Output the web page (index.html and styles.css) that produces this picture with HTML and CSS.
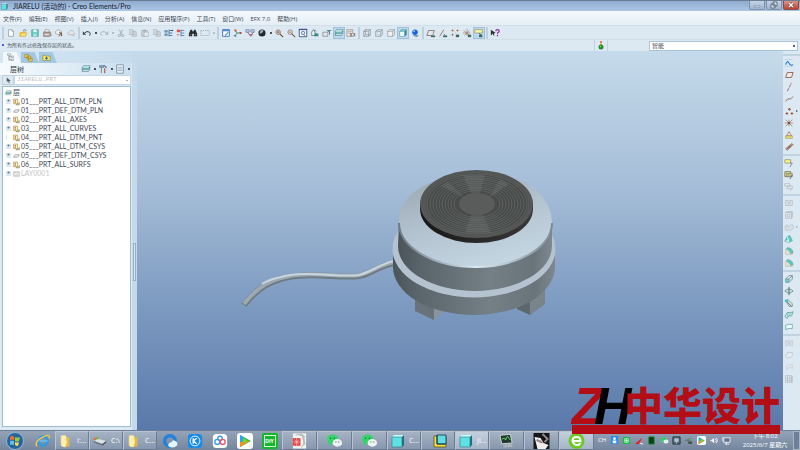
FILE: index.html
```html
<!DOCTYPE html>
<html lang="zh-CN">
<head>
    <meta charset="UTF-8">
    <meta name="viewport" content="width=device-width, initial-scale=1.0">
    <title>JIARELU (活动的) - Creo Elements/Pro</title>
    <link rel="stylesheet" href="styles.css">
</head>
<body>
    <svg class="sprite" aria-hidden="true">
        <symbol id="new" viewBox="0 0 12 12"><path d="M3 2h4l2 2v6H3z" fill="#fff" stroke="#8a8f96" stroke-width=".8"/><path d="M7 2v2h2" fill="none" stroke="#8a8f96" stroke-width=".7"/></symbol>
        <symbol id="open" viewBox="0 0 12 12"><path d="M2 5h3l1-1h3v6H2z" fill="#e8b93a"/><path d="M2 10l2-4h7l-2 4z" fill="#ffe070" stroke="#b98d25" stroke-width=".5"/><path d="M6 3q2-2 4 0" fill="none" stroke="#4c6d9a"/></symbol>
        <symbol id="save" viewBox="0 0 12 12"><path d="M2 2h8v8H2z" fill="#63c9bd" stroke="#3e8f8a" stroke-width=".6"/><path d="M4 2h4v3H4z" fill="#effbfa"/><path d="M4 7h4v3H4z" fill="#b9e4df"/></symbol>
        <symbol id="print" viewBox="0 0 12 12"><path d="M4 2h4l1 3H3z" fill="#fff" stroke="#776a62" stroke-width=".6"/><path d="M2 5h8l1 4-2 1H2z" fill="#b7aaa0" stroke="#665a52" stroke-width=".7"/><path d="M3 8h5" stroke="#f7efe5"/></symbol>
        <symbol id="mail" viewBox="0 0 12 12"><path d="M2 7V4l3-2 4 2v4z" fill="#f6f6f4" stroke="#777" stroke-width=".6"/><path d="M6 5l3 1v3M6 10l2-4" fill="none" stroke="#614c43"/><circle cx="9" cy="9" r="1" fill="#a65a3c"/></symbol>
        <symbol id="cloud" viewBox="0 0 12 12"><path d="M2 7q0-2 2-2 1-3 4-2 1 1 1 2 2 1 1 3H3z" fill="#e4e8eb" stroke="#a1a9b0" stroke-width=".7"/><path d="M6 8l4 2" stroke="#b2b8be"/></symbol>
        <symbol id="undo" viewBox="0 0 12 12"><path d="M3 6q3-3 6-1 2 2 0 4" fill="none" stroke="#384048" stroke-width="1.2"/><path d="M1 4v4h4z" fill="#384048"/></symbol>
        <symbol id="redo" viewBox="0 0 12 12"><path d="M9 6Q6 3 3 5q-2 2 0 4" fill="none" stroke="#a9b2ba" stroke-width="1.1"/><path d="M11 4v4H7z" fill="#a9b2ba"/></symbol>
        <symbol id="cut" viewBox="0 0 12 12"><path d="M4 2l3 6M8 2L5 8" stroke="#9da6ae" fill="none"/><circle cx="4" cy="9" r="1.3" fill="none" stroke="#9da6ae"/><circle cx="8" cy="9" r="1.3" fill="none" stroke="#9da6ae"/></symbol>
        <symbol id="copy" viewBox="0 0 12 12"><path d="M2 2h4l1 1v5H2zM5 4h4l1 1v5H5z" fill="#d6dde2" stroke="#a3acb4" stroke-width=".7"/><path d="M6 6h3M6 8h3" stroke="#adb4bb" stroke-width=".6"/></symbol>
        <symbol id="paste" viewBox="0 0 12 12"><path d="M2 3h7v7H2z" fill="#c7ced4" stroke="#a0a8b0" stroke-width=".7"/><path d="M4 2h3v2H4z" fill="#a0a8b0"/><path d="M5 5h5v5H5z" fill="#e7ebee" stroke="#a0a8b0" stroke-width=".6"/></symbol>
        <symbol id="regen" viewBox="0 0 12 12"><path d="M1 3h3v2H1zM1 7h3v2H1z" fill="#65c5c3" stroke="#447" stroke-width=".5"/><path d="M6 2v8M6 3h4M6 6h4M6 9h4" stroke="#3f6ba0" fill="none"/><circle cx="10" cy="3" r="1" fill="#347"/></symbol>
        <symbol id="regenr" viewBox="0 0 12 12"><path d="M1 2h4v3H1z" fill="#e55243"/><path d="M1 7h3v2H1z" fill="#e89187"/><path d="M6 2v8M6 3h4M6 6h4M6 9h4" stroke="#557cad" fill="none"/></symbol>
        <symbol id="find" viewBox="0 0 12 12"><path d="M3 2h2v2h2V2h2l2 5v3H7V7H5v3H1V7z" fill="#2b2b2d"/><path d="M2 8h2M8 8h2" stroke="#aaa" stroke-width=".7"/></symbol>
        <symbol id="select" viewBox="0 0 12 12"><path d="M1 3h10v6H1z" fill="none" stroke="#8e99a5" stroke-width=".8" stroke-dasharray="1.5 1"/></symbol>
        <symbol id="sketchwin" viewBox="0 0 12 12"><path d="M2 2h8v8H2z" fill="#fff" stroke="#2e64a8"/><path d="M2 2h8v2H2z" fill="#4f8ed1"/><path d="M5 9l4-4" stroke="#4a9ad8" stroke-width="1.4"/></symbol>
        <symbol id="csys" viewBox="0 0 12 12"><path d="M2 2l3 4h5M5 6l-3 4" stroke="#2a7f58" fill="none"/><circle cx="3" cy="3" r="1.2" fill="#d8322d"/><circle cx="9" cy="6" r="1.3" fill="#bd392f"/><path d="M1 9l3 1" stroke="#267"/></symbol>
        <symbol id="views" viewBox="0 0 12 12"><path d="M1 2h4v3H1zM7 2h4v3H7z" fill="#c6d4ec" stroke="#53658d" stroke-width=".7"/><path d="M3 5l4 5 3-5M5 8h4" fill="none" stroke="#8f506b"/></symbol>
        <symbol id="sphere" viewBox="0 0 12 12"><circle cx="6" cy="6" r="4.3" fill="#25292e"/><path d="M4 3q2-1 4 0l-2 3-3 1z" fill="#a2aab3"/></symbol>
        <symbol id="zoomin" viewBox="0 0 12 12"><circle cx="5" cy="5" r="2.7" fill="#e9dbd3" stroke="#8b6b5f"/><path d="M7 7l4 4" stroke="#704437" stroke-width="1.3"/><path d="M3.5 5h3M5 3.5v3" stroke="#543" stroke-width=".7"/></symbol>
        <symbol id="zoomout" viewBox="0 0 12 12"><circle cx="5" cy="5" r="2.7" fill="#ecdfd9" stroke="#92776d"/><path d="M7 7l4 4" stroke="#80584c" stroke-width="1.3"/><path d="M3.5 5h3" stroke="#654" stroke-width=".7"/></symbol>
        <symbol id="refit" viewBox="0 0 12 12"><path d="M1.500 1.500h9v9h-9z" fill="#fff" stroke="#29468b"/><circle cx="6" cy="6" r="2.200" fill="#d6e6f3" stroke="#5a7298"/><path d="M1 2h10" stroke="#29468b"/><path d="M7 8l2 2" stroke="#853"/></symbol>
        <symbol id="orient" viewBox="0 0 12 12"><path d="M2 9V5l2-3 2 3v4z" fill="#e7f3f1" stroke="#455" stroke-width=".7"/><path d="M6 6l4 1v3H5z" fill="#328a7e"/><path d="M5 2l2 2" stroke="#243"/></symbol>
        <symbol id="namedview" viewBox="0 0 12 12"><path d="M1 5h6v5H1z" fill="#dde3e6" stroke="#667078" stroke-width=".7"/><path d="M6 3h5M9 3v5" stroke="#4a6065" stroke-width=".9"/><circle cx="8" cy="4" r="1" fill="#42a0a0"/></symbol>
        <symbol id="layers" viewBox="0 0 12 12"><path d="M1 9l2-3h8L9 9z" fill="#dff4f4" stroke="#3e6f7c" stroke-width=".6"/><path d="M1 7l2-3h8L9 7z" fill="#7fd1cf" stroke="#3e6f7c" stroke-width=".6"/><path d="M1 5l2-3h8L9 5z" fill="#c6efec" stroke="#3e6f7c" stroke-width=".6"/></symbol>
        <symbol id="viewmgr" viewBox="0 0 12 12"><path d="M1 2h7v8H1z" fill="#ebe8e2" stroke="#857c74" stroke-width=".7"/><path d="M2 4h5M2 6h4" stroke="#857c74" stroke-width=".6"/><path d="M5 6h6v4H5z" fill="#8d8075"/><circle cx="8" cy="8" r="1.300" fill="#f1ede5"/></symbol>
        <symbol id="wire" viewBox="0 0 12 12"><path d="M2 4h6v6H2zM4 2h6v6H4zM2 4l2-2M8 4l2-2M2 10l2-2M8 10l2-2" fill="none" stroke="#7b8288" stroke-width=".7"/></symbol>
        <symbol id="hidden" viewBox="0 0 12 12"><path d="M2 4h6v6H2zM2 4l2-2h6v6l-2 2M8 4l2-2" fill="none" stroke="#7b8288" stroke-width=".7"/><path d="M4 4v4h4" fill="none" stroke="#b6bcc0" stroke-width=".6"/></symbol>
        <symbol id="nohidden" viewBox="0 0 12 12"><path d="M2 4h6v6H2zM2 4l2-2h6v6l-2 2M8 4l2-2" fill="#edf2f5" stroke="#81888e" stroke-width=".7"/></symbol>
        <symbol id="shaded" viewBox="0 0 12 12"><path d="M2 4h6v6H2z" fill="#eefcfb"/><path d="M2 4l2-2h6L8 4z" fill="#79d8d5"/><path d="M8 4l2-2v6l-2 2z" fill="#2d8e91"/><path d="M2 4h6v6H2zM2 4l2-2h6v6l-2 2" fill="none" stroke="#4b8186" stroke-width=".6"/></symbol>
        <symbol id="blueball" viewBox="0 0 12 12"><path d="M3 9l3-1 5 1-3 2z" fill="#8497a9"/><circle cx="6" cy="5" r="3.300" fill="#1264dc"/><circle cx="5" cy="4" r="1.200" fill="#83c2ff"/></symbol>
        <symbol id="planeeye" viewBox="0 0 12 12"><path d="M1 9l2-6h7L8 9z" fill="none" stroke="#88614e" stroke-width=".9"/><path d="M6 9h5v2H6z" fill="#3c695f"/></symbol>
        <symbol id="axiseye" viewBox="0 0 12 12"><path d="M2 10l5-8" stroke="#936a52"/><path d="M6 9h5v2H6z" fill="#3c695f"/><path d="M7 7l2 2" stroke="#567"/></symbol>
        <symbol id="pointeye" viewBox="0 0 12 12"><path d="M2 3h2M3 2v2M8 3h2M9 2v2M2 8h2M3 7v2" stroke="#a0582d" stroke-width="1.200"/><path d="M4 3l4 5" stroke="#ccb19b" stroke-width=".6"/><path d="M7 8h4v3H7z" fill="#3c695f"/></symbol>
        <symbol id="csyseye" viewBox="0 0 12 12"><path d="M2 3l7 6M3 9l6-6M6 1v8M1 6h9" stroke="#9b755d" stroke-width=".8"/><path d="M7 8h4v3H7z" fill="#3c695f"/></symbol>
        <symbol id="noteeye" viewBox="0 0 12 12"><path d="M1 2h9v4H1z" fill="#f8f4a4" stroke="#8c8958" stroke-width=".7"/><path d="M6 6l3 3" stroke="#555"/><path d="M6 8h4v3H6z" fill="#3c695f"/></symbol>
        <symbol id="help" viewBox="0 0 12 12"><path d="M1 2v7l2-2 2 3V6h2z" fill="#333"/><path d="M7 4q0-2 2-2t2 2q0 1-2 2v1M9 8v2" fill="none" stroke="#8b2a9b" stroke-width="1.400"/></symbol>
        <symbol id="sketch" viewBox="0 0 12 12"><path d="M1 2h10M1 10h10" stroke="#8fb4df" stroke-width=".8" stroke-dasharray="1.500 1"/><path d="M2 8q2-6 4-2t5 2" fill="none" stroke="#2277d8" stroke-width="1.300"/></symbol>
        <symbol id="plane" viewBox="0 0 12 12"><path d="M2 9l2-6h7L9 9z" fill="#f3e8e2" stroke="#885a48" stroke-width="1"/></symbol>
        <symbol id="axis" viewBox="0 0 12 12"><path d="M4 11l5-10" stroke="#885a48" stroke-dasharray="4 1"/></symbol>
        <symbol id="curve" viewBox="0 0 12 12"><path d="M2 9q2-4 4-3t5-3" fill="none" stroke="#885a48"/></symbol>
        <symbol id="point" viewBox="0 0 12 12"><path d="M2 9h3M3.500 7.500v3M8 9h3M9.500 7.500v3M5 4h3M6.500 2.500v3" stroke="#9a5133" stroke-width="1.300"/></symbol>
        <symbol id="star" viewBox="0 0 12 12"><path d="M2 2l8 8M2 10l8-8M1 6h10M6 2v8" stroke="#96765f" stroke-width=".8"/><circle cx="6" cy="6" r="1.600" fill="#934930"/></symbol>
        <symbol id="field" viewBox="0 0 12 12"><path d="M3 7l3-5 3 5z" fill="#eee" stroke="#945b43" stroke-width=".8"/><path d="M2 7h8v3H2z" fill="#e8dc73" stroke="#96894d" stroke-width=".6"/></symbol>
        <symbol id="chain" viewBox="0 0 12 12"><path d="M2 8l7-6 2 1-7 7z" fill="#cfae98" stroke="#885a48" stroke-width=".8"/><path d="M4 8l5-4" stroke="#603c2d"/></symbol>
        <symbol id="note" viewBox="0 0 12 12"><path d="M1 2h7v4H1z" fill="#f7f28b" stroke="#8e8a55" stroke-width=".8"/><path d="M7 6h3L7 11" fill="none" stroke="#77808a"/></symbol>
        <symbol id="notes" viewBox="0 0 12 12"><path d="M1 2h7v6H1z" fill="#e5df8d" stroke="#77744f"/><path d="M3 4h7v4H3z" fill="#bdb985" stroke="#6e6d5d" stroke-width=".6"/><path d="M10 6L7 11" stroke="#667"/></symbol>
        <symbol id="tags" viewBox="0 0 12 12"><path d="M1 2h6v3H1zM4 5h6v3H4zM8 8v3" fill="#e6e9eb" stroke="#a9b3bb" stroke-width=".8"/></symbol>
        <symbol id="hole" viewBox="0 0 12 12"><path d="M2 3h3v4h2V3h3v6H2z" fill="#dfe4e8" stroke="#adb6be" stroke-width=".8"/></symbol>
        <symbol id="shell" viewBox="0 0 12 12"><path d="M2 3h7v7H2zM4 5h3v3H4zM2 3l1-1h7v7l-1 1" fill="#e8ebee" stroke="#a8b0b8" stroke-width=".8"/></symbol>
        <symbol id="rib" viewBox="0 0 12 12"><path d="M1 5l3-2v3l5-3 2 1v4L8 10H2z" fill="#d9dee2" stroke="#b5bcc2" stroke-width=".7"/></symbol>
        <symbol id="draft" viewBox="0 0 12 12"><path d="M1 9l3-6 3-1 3 6-4 2z" fill="#55d1c7" stroke="#428f8e" stroke-width=".7"/><path d="M4 3l2 7" stroke="#e9ffff"/><path d="M1 9l3-2 2 3z" fill="#e8e2cc"/></symbol>
        <symbol id="round" viewBox="0 0 12 12"><path d="M2 4v6h8V8Q8 3 4 2z" fill="#e9dfc8" stroke="#a79d86" stroke-width=".5"/><path d="M4 2q6 0 7 6l-3 1Q7 5 3 4z" fill="#50cbc3" stroke="#6d9590" stroke-width=".6"/></symbol>
        <symbol id="extrude" viewBox="0 0 12 12"><path d="M2 6h4v4H2z" fill="#74d9d3" stroke="#477f84" stroke-width=".7"/><path d="M2 6l4-4h4v4l-4 4M6 6l4-4" fill="none" stroke="#5a7076" stroke-width=".8"/></symbol>
        <symbol id="revolve" viewBox="0 0 12 12"><path d="M1 6q5-5 10 0-5 5-10 0" fill="#c8deda" stroke="#587d79" stroke-width=".8"/><path d="M6 1v10" stroke="#355f5c"/></symbol>
        <symbol id="sweep" viewBox="0 0 12 12"><path d="M2 3l3-1 5 5v3H6z" fill="#d9e4df" stroke="#657f7c" stroke-width=".8"/><path d="M1 2h4v3H1z" fill="#4fbfc4"/><path d="M4 5l5 5" stroke="#466"/></symbol>
        <symbol id="blend" viewBox="0 0 12 12"><path d="M1 8l3-5q4 1 7-1L9 7Q5 6 4 10z" fill="#c8f4ef" stroke="#4c8b8b" stroke-width=".8"/><path d="M5 3L4 8M8 3L6 7" stroke="#4c8b8b" stroke-width=".6"/></symbol>
        <symbol id="style" viewBox="0 0 12 12"><path d="M2 9V4q3-2 8-1v5q-4-1-8 1z" fill="#e6fffc" stroke="#5f9291" stroke-width=".8"/></symbol>
        <symbol id="mirror" viewBox="0 0 12 12"><path d="M2 3l3 1v4L2 10zM10 3L7 4v4l3 2z" fill="#dce1e5" stroke="#b7c0c7" stroke-width=".7"/><path d="M6 1v10" stroke="#bac2c9" stroke-width=".6"/></symbol>
        <symbol id="merge" viewBox="0 0 12 12"><path d="M2 6l2-1V3h6v4L8 9H6l-2 1-2-2z" fill="#e8ebed" stroke="#b8c0c6" stroke-width=".8"/></symbol>
        <symbol id="trim" viewBox="0 0 12 12"><path d="M3 5q3-3 7-2v5L7 6 3 9z" fill="#e4e8ea" stroke="#c1c8ce" stroke-width=".8"/></symbol>
        <symbol id="pattern" viewBox="0 0 12 12"><path d="M2 2h7v8H2zM2 5h7M2 7.500h7M4.500 2v8M7 2v8M9 2l1 1v7H9" fill="#edf0f2" stroke="#a4adb5" stroke-width=".7"/></symbol>
        <symbol id="tree" viewBox="0 0 12 12"><path d="M4 2v8M4 5h4M4 9h4" stroke="#737d86" fill="none"/><path d="M2 1h4v2H2zM7 4h3v2H7zM7 8h3v2H7z" fill="#fff" stroke="#737d86" stroke-width=".7"/></symbol>
        <symbol id="folders" viewBox="0 0 12 12"><path d="M1 2h5v4H1zM4 4h5v4H4zM6 7h5v4H6z" fill="#f1ce46" stroke="#8f7628" stroke-width=".7"/></symbol>
        <symbol id="favs" viewBox="0 0 12 12"><path d="M1 3h3l1 1h6v6H1z" fill="#f5e255" stroke="#7c7b48" stroke-width=".7"/><path d="M6 5v4M4 7h4" stroke="#2b69c8" stroke-width="1.300"/></symbol>
        <symbol id="tools" viewBox="0 0 12 12"><path d="M2 2h5v2H2zM4 4v7" stroke="#657b8d" fill="#9ab0bf"/><path d="M8 5v6" stroke="#c26347" stroke-width="1.500"/><path d="M7 2q3 0 3 3" stroke="#346" fill="none"/></symbol>
        <symbol id="list" viewBox="0 0 12 12"><path d="M2 1h8v10H2z" fill="#f6fafc" stroke="#607484" stroke-width=".8"/><path d="M3 4h6M3 6h6M3 8h6" stroke="#6c8fae" stroke-width=".8"/></symbol>
        <symbol id="arrow" viewBox="0 0 12 12"><path d="M3 1v8l2-2 2 4 1-1-1-3h3z" fill="#525a61"/></symbol>
        <symbol id="rule" viewBox="0 0 12 12"><path d="M1 1h7v8H1z" fill="#fbf2cb" stroke="#a1822e"/><path d="M3 3h2v2H3z" fill="#c1372b"/><path d="M3 6h2v2H3z" fill="#c58b2b"/><path d="M5 11h6V7L8 9z" fill="#d6cf9d" stroke="#6f6848" stroke-width=".7"/></symbol>
        <symbol id="sheet" viewBox="0 0 12 12"><path d="M1 8l3-4h7L8 8z" fill="#fff" stroke="#5e676f"/></symbol>
        <symbol id="hiddenlayer" viewBox="0 0 12 12"><path d="M1 2h10v8H1z" fill="#d8d8d8" stroke="#bbb"/><path d="M2 5h8M2 7h8" stroke="#f4f4f4"/></symbol>
        <symbol id="folder" viewBox="0 0 16 16"><path d="M2 2l5-1v14l-5-2z" fill="#f7df88"/><path d="M7 3l5 1v10l-5 1z" fill="#e3b84d"/><path d="M3 2h5l1 8-2 5-4-1z" fill="#fdf0ae"/></symbol>
        <symbol id="wechat" viewBox="0 0 18 16"><ellipse cx="7" cy="6" rx="6" ry="5" fill="#35d46b"/><path d="M3 9l-1 4 4-2z" fill="#35d46b"/><ellipse cx="12" cy="10" rx="5" ry="4" fill="#edf5f0"/><circle cx="5" cy="5" r=".8" fill="#18703b"/><circle cx="9" cy="5" r=".8" fill="#18703b"/><circle cx="10.500" cy="9" r=".7" fill="#778"/><circle cx="13.500" cy="9" r=".7" fill="#778"/></symbol>
        <symbol id="cube" viewBox="0 0 14 14"><path d="M1 3h10v10H1z" fill="#5fe0e2"/><path d="M1 3l2-2h10l-2 2z" fill="#c4ffff"/><path d="M11 3l2-2v10l-2 2z" fill="#226e78"/><path d="M1 3h10v10H1z" fill="none" stroke="#287884" stroke-width=".6"/></symbol>
        <symbol id="play" viewBox="0 0 16 16"><rect width="16" height="16" rx="3" fill="#fff"/><path d="M3 2l11 6-11 6z" fill="#35bd44"/><path d="M3 2l5 3v6l-5 3z" fill="#26a9ee"/><path d="M3 9v5l10-6z" fill="#ff8b18"/><path d="M6 5l5 3-5 3z" fill="#7fd329"/></symbol>
    </svg>

    <header class="titlebar">
        <svg class="app-icon"><use href="#cube"/></svg>
        <h1>JIARELU (活动的) - Creo Elements/Pro</h1>
        <div class="window-btns">
            <button aria-label="最小化"><svg viewBox="0 0 12 8"><path d="M3 5h6v1H3z" fill="#fff" stroke="#617087" stroke-width=".5"/></svg></button>
            <button aria-label="还原"><svg viewBox="0 0 12 8"><path d="M5 1h4v4H5zM3 3h4v4H3z" fill="#e9f0f8" stroke="#4f5f75" stroke-width=".9"/></svg></button>
            <button class="close" aria-label="关闭"><svg viewBox="0 0 12 8"><path d="M4 2l4 4M8 2L4 6" stroke="#693b39" stroke-width="2.500"/><path d="M4 2l4 4M8 2L4 6" stroke="#fff" stroke-width="1.500"/></svg></button>
        </div>
    </header>

    <nav class="menu">
        <a href="#">文件(F)</a>
        <a href="#">编辑(E)</a>
        <a href="#">视图(V)</a>
        <a href="#">插入(I)</a>
        <a href="#">分析(A)</a>
        <a href="#">信息(N)</a>
        <a href="#">应用程序(P)</a>
        <a href="#">工具(T)</a>
        <a href="#">窗口(W)</a>
        <a href="#">EFX 7.0</a>
        <a href="#">帮助(H)</a>
    </nav>

    <div class="toolbar">
        <span class="sep"></span>
        <button aria-label="新建"><svg><use href="#new"/></svg></button>
        <button aria-label="打开"><svg><use href="#open"/></svg></button>
        <button aria-label="保存"><svg><use href="#save"/></svg></button>
        <button aria-label="打印"><svg><use href="#print"/></svg></button>
        <button aria-label="发送"><svg><use href="#mail"/></svg></button>
        <button aria-label="链接"><svg><use href="#cloud"/></svg></button>
        <span class="sep"></span>
        <button aria-label="撤消"><svg><use href="#undo"/></svg></button>
        <button class="drop" aria-label="撤消列表"></button>
        <button aria-label="重做"><svg><use href="#redo"/></svg></button>
        <button class="drop off" aria-label="重做列表"></button>
        <button aria-label="剪切"><svg><use href="#cut"/></svg></button>
        <button aria-label="复制"><svg><use href="#copy"/></svg></button>
        <button aria-label="粘贴"><svg><use href="#paste"/></svg></button>
        <button aria-label="选择性粘贴"><svg><use href="#copy"/></svg></button>
        <button aria-label="再生"><svg><use href="#regen"/></svg></button>
        <button aria-label="再生管理器"><svg><use href="#regenr"/></svg></button>
        <button aria-label="查找"><svg><use href="#find"/></svg></button>
        <button aria-label="选取"><svg><use href="#select"/></svg></button>
        <button class="drop off" aria-label="选取列表"></button>
        <span class="sep"></span>
        <button aria-label="重画"><svg><use href="#sketchwin"/></svg></button>
        <button aria-label="旋转中心"><svg><use href="#csys"/></svg></button>
        <button aria-label="定向模式"><svg><use href="#views"/></svg></button>
        <button aria-label="外观库"><svg><use href="#sphere"/></svg></button>
        <button class="drop" aria-label="外观列表"></button>
        <button aria-label="放大"><svg><use href="#zoomin"/></svg></button>
        <button aria-label="缩小"><svg><use href="#zoomout"/></svg></button>
        <button aria-label="重新调整"><svg><use href="#refit"/></svg></button>
        <button aria-label="重定向"><svg><use href="#orient"/></svg></button>
        <button aria-label="已命名视图"><svg><use href="#namedview"/></svg></button>
        <button class="on" aria-label="层"><svg><use href="#layers"/></svg></button>
        <button aria-label="视图管理器"><svg><use href="#viewmgr"/></svg></button>
        <span class="sep"></span>
        <button aria-label="线框"><svg><use href="#wire"/></svg></button>
        <button aria-label="隐藏线"><svg><use href="#hidden"/></svg></button>
        <button aria-label="无隐藏线"><svg><use href="#nohidden"/></svg></button>
        <button class="on" aria-label="着色"><svg><use href="#shaded"/></svg></button>
        <button aria-label="增强的真实感"><svg><use href="#blueball"/></svg></button>
        <span class="sep"></span>
        <button aria-label="平面显示"><svg><use href="#planeeye"/></svg></button>
        <button aria-label="轴显示"><svg><use href="#axiseye"/></svg></button>
        <button aria-label="点显示"><svg><use href="#pointeye"/></svg></button>
        <button aria-label="坐标系显示"><svg><use href="#csyseye"/></svg></button>
        <button class="on" aria-label="注释显示"><svg><use href="#noteeye"/></svg></button>
        <span class="sep"></span>
        <button aria-label="上下文相关帮助"><svg><use href="#help"/></svg></button>
    </div>

    <div class="status">
        <p class="message">为所有作过修改保存层的状态。</p>
        <div class="light">
            <svg viewBox="0 0 8 10"><path d="M3 1h2v2H3z" fill="#d6818a"/><path d="M3 3h2v2H3z" fill="#ddc552"/><circle cx="4" cy="7" r="2.500" fill="#248a2b"/><circle cx="3.500" cy="6.500" r=".8" fill="#87dc73"/></svg>
        </div>
        <select class="filter" aria-label="选取过滤器"><option>智能</option></select>
    </div>

    <main>
        <aside class="side">
            <div class="tabs">
                <button class="tab active" aria-label="模型树"><svg><use href="#tree"/></svg></button>
                <button class="tab" aria-label="文件夹浏览器"><svg><use href="#folders"/></svg></button>
                <button class="tab" aria-label="收藏夹"><svg><use href="#favs"/></svg></button>
            </div>
            <div class="side-head">
                <h2>层树</h2>
                <button aria-label="显示"><svg><use href="#layers"/></svg></button>
                <button class="drop" aria-label="显示列表"></button>
                <button aria-label="设置"><svg><use href="#tools"/></svg></button>
                <button class="drop" aria-label="设置列表"></button>
                <button aria-label="层"><svg><use href="#list"/></svg></button>
                <button class="drop" aria-label="层列表"></button>
            </div>
            <div class="model-pick">
                <button aria-label="选取模型"><svg><use href="#arrow"/></svg></button>
                <select aria-label="活动模型" disabled><option>JIARELU.PRT</option></select>
            </div>
            <ul class="tree">
                <li class="root"><svg><use href="#layers"/></svg>层</li>
                <li><i>+</i><svg><use href="#rule"/></svg>01___PRT_ALL_DTM_PLN</li>
                <li><i>+</i><svg><use href="#sheet"/></svg>01___PRT_DEF_DTM_PLN</li>
                <li><i>+</i><svg><use href="#rule"/></svg>02___PRT_ALL_AXES</li>
                <li><i>+</i><svg><use href="#rule"/></svg>03___PRT_ALL_CURVES</li>
                <li><i class="leaf"></i><svg><use href="#rule"/></svg>04___PRT_ALL_DTM_PNT</li>
                <li><i>+</i><svg><use href="#rule"/></svg>05___PRT_ALL_DTM_CSYS</li>
                <li><i>+</i><svg><use href="#sheet"/></svg>05___PRT_DEF_DTM_CSYS</li>
                <li><i>+</i><svg><use href="#rule"/></svg>06___PRT_ALL_SURFS</li>
                <li class="dim"><i>+</i><svg><use href="#hiddenlayer"/></svg>LAY0001</li>
            </ul>
        </aside>
        <div class="splitter"><span></span></div>

        <section class="view">
            <svg class="model" viewBox="137 51 646 379" role="img" aria-label="JIARELU">
                <defs>
                    <linearGradient id="wall" x1="0" x2="1"><stop offset="0" stop-color="#4b545b"/><stop offset=".15" stop-color="#5a646b"/><stop offset=".6" stop-color="#747f86"/><stop offset=".88" stop-color="#69737a"/><stop offset="1" stop-color="#7d8991"/></linearGradient>
                    <linearGradient id="dome" x1="0" y1="0" x2=".5" y2="1"><stop offset="0" stop-color="#9aa8b2"/><stop offset=".5" stop-color="#b2c1ce"/><stop offset="1" stop-color="#c3d5e1"/></linearGradient>
                    <linearGradient id="lip" x1="0" x2="1"><stop offset="0" stop-color="#6d7a84"/><stop offset=".3" stop-color="#a9b9c5"/><stop offset=".5" stop-color="#daeaf3"/><stop offset=".7" stop-color="#b7c7d2"/><stop offset="1" stop-color="#7b8891"/></linearGradient>
                    <linearGradient id="rim" x1="0" x2="1"><stop offset="0" stop-color="#171717"/><stop offset=".5" stop-color="#292828"/><stop offset="1" stop-color="#393737"/></linearGradient>
                </defs>
                <g fill="none" stroke-linecap="butt">
                    <path d="M244 305Q260 284 281 279C306 271 341 279 359 276C372 274 379 265 395 263" stroke="#6f7a82" stroke-width="6"/>
                    <path d="M244 304Q260 283 281 278C306 270 341 278 359 275C372 273 379 264 395 262" stroke="#9ca9b2" stroke-width="4"/>
                    <path d="M262 284Q270 279 281 277C306 270 341 278 359 275C372 272 379 264 394 261" stroke="#c7d5df" stroke-width="2"/>
                </g>
                <path d="M415 290v21l19 9V300z" fill="#68727a"/>
                <path d="M434 320l9-8v-12l-9-2z" fill="#89959e"/>
                <path d="M545 285v19l-15 11V300z" fill="#78838a"/>
                <path d="M530 315l-13-6v-9l13-2z" fill="#5d676e"/>
                <path d="M393 249v18A81 48 0 0 0 555 267V249z" fill="url(#wall)"/>
                <ellipse cx="474" cy="249" rx="81.500" ry="48.500" fill="#b5c3d0"/>
                <path d="M399 222L398 246A77 45 0 0 0 552 246V222z" fill="url(#wall)"/>
                <path d="M399 223C398 203 413 189 435 181H522C540 190 552 205 552 223A76.500 44 0 0 1 399 223z" fill="url(#dome)"/>
                <path d="M399 223A76.500 44 0 0 0 552 223" fill="none" stroke="url(#lip)" stroke-width="2"/>
                <path d="M420 203v6A56.500 34 0 0 0 533 209v-6z" fill="url(#rim)"/>
                <ellipse cx="476.500" cy="204" rx="56.500" ry="34" fill="#555757"/>
                <ellipse cx="477" cy="204" rx="51" ry="30.500" fill="#484b4a"/>
                <g fill="none" stroke="#5f6362" stroke-width=".9">
                    <ellipse cx="477" cy="204" rx="50" ry="30"/>
                    <ellipse cx="477" cy="204" rx="47" ry="28"/>
                    <ellipse cx="477" cy="204" rx="44" ry="26"/>
                    <ellipse cx="477" cy="204" rx="41" ry="24.500"/>
                    <ellipse cx="477" cy="204" rx="38" ry="22.500"/>
                    <ellipse cx="477" cy="204" rx="35" ry="21"/>
                    <ellipse cx="477" cy="204" rx="32" ry="19"/>
                    <ellipse cx="477" cy="204" rx="29" ry="17"/>
                    <ellipse cx="477" cy="204" rx="26" ry="15.500"/>
                    <ellipse cx="477" cy="204" rx="23" ry="13.500"/>
                </g>
                <g fill="#87908d" opacity=".2">
                    <path d="M463 175h22l-5 18h-9zM471 215h12l8 18h-26zM500 179l9 5-20 14zM448 182l-7 4 24 12z"/>
                </g>
                <ellipse cx="477" cy="204" rx="18" ry="11" fill="#5a5c5b"/>
            </svg>
        </section>

        <div class="rail">
            <span class="sep"></span>
            <button aria-label="草绘"><svg><use href="#sketch"/></svg></button>
            <button aria-label="平面"><svg><use href="#plane"/></svg></button>
            <button aria-label="轴"><svg><use href="#axis"/></svg></button>
            <button aria-label="曲线"><svg><use href="#curve"/></svg></button>
            <button class="more" aria-label="点"><svg><use href="#point"/></svg></button>
            <button aria-label="坐标系"><svg><use href="#star"/></svg></button>
            <button aria-label="分析"><svg><use href="#field"/></svg></button>
            <button aria-label="参照"><svg><use href="#chain"/></svg></button>
            <span class="sep"></span>
            <button aria-label="注释"><svg><use href="#note"/></svg></button>
            <button aria-label="注释特征"><svg><use href="#notes"/></svg></button>
            <button aria-label="传播"><svg><use href="#tags"/></svg></button>
            <span class="sep"></span>
            <button aria-label="孔"><svg><use href="#hole"/></svg></button>
            <button aria-label="壳"><svg><use href="#shell"/></svg></button>
            <button class="more off" aria-label="筋"><svg><use href="#rib"/></svg></button>
            <button aria-label="拔模"><svg><use href="#draft"/></svg></button>
            <button aria-label="倒圆角"><svg><use href="#round"/></svg></button>
            <button aria-label="倒角"><svg><use href="#round"/></svg></button>
            <span class="sep"></span>
            <button aria-label="拉伸"><svg><use href="#extrude"/></svg></button>
            <button aria-label="旋转"><svg><use href="#revolve"/></svg></button>
            <button aria-label="扫描"><svg><use href="#sweep"/></svg></button>
            <button aria-label="边界混合"><svg><use href="#blend"/></svg></button>
            <button aria-label="造型"><svg><use href="#style"/></svg></button>
            <span class="sep"></span>
            <button aria-label="镜像"><svg><use href="#mirror"/></svg></button>
            <button aria-label="合并"><svg><use href="#merge"/></svg></button>
            <button aria-label="修剪"><svg><use href="#trim"/></svg></button>
            <button aria-label="阵列"><svg><use href="#pattern"/></svg></button>
        </div>
    </main>

    <footer class="taskbar">
        <button class="pin start" aria-label="开始"><svg viewBox="0 0 18 18"><circle cx="9" cy="9" r="8.500" fill="#27649b" stroke="#8fb9d8"/><path d="M4 5q2-2 4 0v3q-2-1-4 0z" fill="#f26f32"/><path d="M9 5q2 1 5 0l-1 4q-2 1-4 0z" fill="#9bcb38"/><path d="M4 9q2-1 4 0v4q-2-1-4 0z" fill="#62bdf0"/><path d="M9 10q2 1 4 0l-1 4q-2 0-3-1z" fill="#ffd94a"/></svg></button>
        <button class="pin" aria-label="Internet Explorer"><svg viewBox="0 0 18 18"><circle cx="9" cy="9" r="5" fill="none" stroke="#2e9be5" stroke-width="3"/><path d="M5 9h9" stroke="#63bbf4" stroke-width="2"/><path d="M2 15Q-1 10 8 5q9-5 8 1" fill="none" stroke="#f5c644" stroke-width="1.500"/></svg></button>
        <button class="task"><svg><use href="#folder"/></svg>I:...</button>
        <button class="task"><svg viewBox="0 0 18 16"><path d="M1 8l5-3 11 3-5 4z" fill="#dce1e4"/><path d="M1 8l11 4v2L1 10z" fill="#687681"/><path d="M12 12l5-4v2l-5 4z" fill="#424c54"/><path d="M1 4h3v3H1z" fill="#e96942"/><path d="M4 3h3v3H4z" fill="#74b844"/></svg>C:\</button>
        <button class="task"><svg><use href="#folder"/></svg>C...</button>
        <button class="pin" aria-label="浏览器"><svg viewBox="0 0 18 18"><circle cx="9" cy="9" r="6" fill="none" stroke="#2282dc" stroke-width="4"/><path d="M7 13q1-3 4-3 1-3 4-1 3 1 2 5-3 3-7 2-3 0-3-3" fill="#e4f5ff"/></svg></button>
        <button class="pin" aria-label="酷狗"><svg viewBox="0 0 18 18"><rect x="1" y="1" width="16" height="16" rx="4" fill="#168be8"/><circle cx="9" cy="9" r="5.500" fill="none" stroke="#fff"/><path d="M7 6v6M11 6L7 9l4 3" fill="none" stroke="#fff" stroke-width="1.500"/></svg></button>
        <button class="pin" aria-label="百度网盘"><svg viewBox="0 0 18 18"><rect x="1" y="1" width="16" height="16" rx="4" fill="#fff"/><circle cx="9" cy="6" r="2.500" fill="none" stroke="#2f8ff0" stroke-width="1.500"/><circle cx="6" cy="10" r="2.800" fill="none" stroke="#26a0f1" stroke-width="1.500"/><circle cx="12" cy="10" r="2.800" fill="none" stroke="#f05462" stroke-width="1.500"/></svg></button>
        <button class="pin" aria-label="视频"><svg><use href="#play"/></svg></button>
        <button class="pin diy" aria-label="DIY"><span>DIY</span></button>
        <button class="task wide" aria-label="图片"><svg viewBox="0 0 18 16"><path d="M2 0h14v16H2z" fill="#f2f2f1"/><path d="M2 5h8v8H2z" fill="#e32f32"/><path d="M3 6l6 6M9 6l-6 6M6 5v8M2 9h8" stroke="#fbc1bd" stroke-width=".8"/><path d="M9 2q5-1 5 5t-3 8M5 2q7-3 10 2M12 3l3 9" fill="none" stroke="#9ba1a4" stroke-width=".8"/></svg></button>
        <button class="task wide" aria-label="微信"><svg><use href="#wechat"/></svg></button>
        <button class="task wide" aria-label="微信"><svg><use href="#wechat"/></svg></button>
        <button class="task"><svg><use href="#cube"/></svg>C...</button>
        <button class="task" aria-label="装配"><svg class="center" viewBox="0 0 14 14"><path d="M1 2h12v11H1z" fill="#f2de3b" stroke="#5b5720" stroke-width=".8"/><path d="M4 1h9v9H4z" fill="#61dde1" stroke="#244f60"/><path d="M4 1v9h9" fill="none" stroke="#1c3b4a"/></svg></button>
        <button class="task current"><svg><use href="#cube"/></svg>JI...</button>
        <button class="task wide" aria-label="系统监视器"><svg viewBox="0 0 18 16"><path d="M2 2l11-1 2 9-11 1z" fill="#20382d" stroke="#d2d7d7"/><path d="M4 6l3-1 1 2 2-4 3 4" fill="none" stroke="#66d36e"/><path d="M6 12l9-1v3l-9 1z" fill="#acb4b6"/></svg></button>
        <button class="task wide" aria-label="照片"><svg viewBox="0 0 16 16"><path d="M0 0h16v16H0z" fill="#171719"/><path d="M1 4l6 1 3 5 5 2-3 4H4z" fill="#eee"/><path d="M3 7l5 2M9 1l5 5-3 3" stroke="#938a8b" stroke-width="2"/><path d="M7 9l2 1" stroke="#b53e50"/></svg></button>
        <button class="task wide bright" aria-label="安全浏览器"><svg viewBox="0 0 16 16"><circle cx="8" cy="8" r="8" fill="#6cc926"/><path d="M4 8h8q0-4-4-4T4 8q1 4 5 4 2 0 3-2" fill="none" stroke="#fff" stroke-width="2"/></svg></button>
        <div class="tray">
            <span class="lang">CH</span>
            <svg viewBox="0 0 10 10"><path d="M1 0h8v9H1z" fill="#298ce9"/><circle cx="5" cy="3" r="1.500" fill="#fff"/><path d="M3 5h4v3H3z" fill="#fff"/></svg>
            <svg viewBox="0 0 10 10"><rect x="1" y="1" width="8" height="8" rx="1" fill="#20ba43"/><path d="M3 3h4v4H3zM5 3v4M3 5h4" fill="none" stroke="#d4ffd9" stroke-width=".8"/></svg>
            <svg viewBox="0 0 10 10"><path d="M0 9l8-7-3 6 4 1z" fill="#db1e24"/><path d="M5 8l4 1" stroke="#fff"/></svg>
            <svg viewBox="0 0 10 10"><path d="M2 1h6v8H2z" fill="#063f13" stroke="#1a8d2b"/></svg>
            <svg><use href="#wechat"/></svg>
            <svg viewBox="0 0 10 10"><path d="M1 1h8v8H1z" fill="#58687b" stroke="#233"/><path d="M3 3h4v3H3zM5 6v3" fill="#a9bccd" stroke="#cde" stroke-width=".6"/></svg>
            <svg viewBox="0 0 10 10"><path d="M0 5l8-3v4z" fill="#677"/><path d="M4 6h5v3H5z" fill="#4a524c"/><circle cx="7" cy="4" r="1" fill="#6c5"/></svg>
            <svg><use href="#play"/></svg>
            <svg viewBox="0 0 10 10"><path d="M1 4h2l3-3v8L3 6H1z" fill="#f3f6f9" stroke="#667" stroke-width=".5"/><path d="M7 3q2 2 0 4M8 2q3 3 0 6" fill="none" stroke="#eef"/></svg>
            <svg viewBox="0 0 10 10"><path d="M2 2h7v5H2z" fill="#667685" stroke="#eef"/><path d="M5 7v2M3 9h5M1 1v5" stroke="#eef"/></svg>
        </div>
        <time class="clock"><span>下午 8:02</span><span>2025/6/7 星期六</span></time>
        <button class="desktop" aria-label="显示桌面"></button>
    </footer>

    <div class="brand">
        <span class="mark"><b>Z</b><em>H</em></span>
        <span class="name">中华设计</span>
    </div>
</body>
</html>
```

FILE: styles.css
```css
*{
    box-sizing: border-box;
}
body{
    margin: 0px;
    height: 100vh;
    display: flex;
    flex-direction: column;
    overflow: hidden;
    position: relative;
    background-color: #dce9f3;
    color: #3f4a55;
    font-family: "Open Sans", "Noto Sans CJK SC", sans-serif;
    font-size: 6px;
    line-height: 9px;
}
h1, h2, p, ul{
    margin: 0px;
    padding: 0px;
    font-size: inherit;
    font-weight: normal;
}
button, select{
    margin: 0px;
    padding: 0px;
    border: none;
    background: none;
    color: inherit;
    font: inherit;
}
svg{
    display: block;
    flex: none;
}
.sprite{
    position: absolute;
    width: 0px;
    height: 0px;
}

/* title bar and menu */
.titlebar{
    height: 11px;
    flex: none;
    display: flex;
    align-items: center;
    border-top: solid 1px #6d7c8e;
    background: linear-gradient(#8fabcf, #acc6e5);
    color: #17212e;
}
.app-icon{
    width: 7px;
    height: 7px;
    margin: 0px 5px 0px 1px;
}
.titlebar h1{
    flex: 1;
    font-family: Lato, "Noto Sans CJK SC", sans-serif;
    font-size: 7px;
}
.window-btns{
    display: flex;
    align-self: flex-start;
    gap: 1px;
    padding-right: 1px;
}
.window-btns button{
    width: 16px;
    height: 9px;
    border: solid 1px #7f93ad;
    border-top: none;
    border-radius: 0px 0px 2px 2px;
    background: linear-gradient(#c3d4e8, #9eb4ce);
}
.window-btns svg{
    width: 100%;
    height: 8px;
}
.window-btns .close{
    border-color: #8c4a4a;
    background: linear-gradient(#dd9387, #c14331);
}
.menu{
    height: 14px;
    flex: none;
    display: flex;
    align-items: center;
    gap: 7px;
    padding: 3px 3px 0px;
    background: linear-gradient(#f4f9fd, #e5eef6);
}
.menu a{
    color: #3f4954;
    text-decoration: none;
    white-space: nowrap;
}

/* toolbars */
.toolbar{
    height: 14px;
    flex: none;
    display: flex;
    align-items: center;
    padding-left: 1px;
    border-top: solid 1px #d2e0ea;
}
.toolbar button, .side-head button{
    width: 12px;
    height: 12px;
    flex: none;
}
.toolbar svg, .side-head svg{
    width: 10px;
    height: 10px;
    margin: 0px auto;
}
.toolbar .on{
    background-color: #b9d9f1;
    border: solid 1px #a3c0d8;
}
.toolbar .on svg{
    margin: 0px;
}
.toolbar .sep{
    width: 2px;
    height: 12px;
    margin: 0px 1px;
    background-color: #bdd0df;
}
.toolbar .drop, .side-head .drop{
    width: 5px;
}
.drop::before{
    content: "";
    display: block;
    width: 2px;
    height: 2px;
    margin: 0px auto;
    background-color: #4a535c;
}
.drop.off::before{
    background-color: #b3bdc6;
}
.status{
    height: 12px;
    flex: none;
    display: flex;
    align-items: center;
    padding: 0px 2px;
    border-top: solid 1px #d2e0ea;
}
.message{
    flex: 1;
    font-size: 5px;
}
.message::before{
    content: "";
    display: inline-block;
    width: 2px;
    height: 2px;
    margin: 0px 3px 1px 0px;
    vertical-align: middle;
    border-radius: 1px;
    background-color: #1d2fe0;
}
.light{
    width: 14px;
    height: 11px;
    margin-right: 41px;
    border: solid #c3d3df;
    border-width: 0px 1px;
}
.light svg{
    width: 8px;
    height: 10px;
    margin: 0px auto;
}
.filter{
    appearance: none;
    width: 149px;
    height: 10px;
    padding: 0px 2px;
    border: solid 1px #a8c4d6;
    background: #fff linear-gradient(#59636d, #59636d) no-repeat right 2px center / 2px 2px;
    line-height: 8px;
}

/* work area */
main{
    flex: 1;
    min-height: 0px;
    display: flex;
}
.side{
    width: 132px;
    display: flex;
    flex-direction: column;
    padding: 0px 1px 3px 2px;
}
.tabs{
    height: 12px;
    display: flex;
    margin: 0px -1px 0px -2px;
    padding: 1px 0px 0px 3px;
    background: linear-gradient(90deg, #d5e6f2, #c5dcee);
}
.tab{
    width: 18px;
    height: 11px;
    background-color: #a5c8e2;
    clip-path: polygon(0 0, 75% 0, 100% 100%, 0 100%);
}
.tab.active{
    background-color: #f3f8fc;
}
.tab svg{
    width: 9px;
    height: 9px;
    margin: 1px 3px;
}
.side-head{
    height: 12px;
    display: flex;
    align-items: center;
    margin-left: -2px;
    padding-left: 10px;
    background: linear-gradient(90deg, #f7fbfe, #c9dfef);
    color: #222b34;
}
.side-head h2{
    flex: 1;
    font-size: 7px;
}
.model-pick{
    display: flex;
    height: 11px;
    padding-bottom: 1px;
}
.model-pick button{
    width: 12px;
    border: solid 1px #c3d1dc;
}
.model-pick svg{
    width: 7px;
    height: 7px;
    margin: 0px auto;
}
.model-pick select{
    appearance: none;
    flex: 1;
    padding: 0px 2px;
    border: solid 1px #c5d7e4;
    background: #fff linear-gradient(#aab4bd, #aab4bd) no-repeat right 2px center / 2px 1px;
    color: #bdc1c5;
    opacity: 1;
    font-family: "Liberation Mono", monospace;
    line-height: 8px;
}
.tree{
    flex: 1;
    padding: 1px 0px 0px 2px;
    border: solid 1px #9dbdd3;
    background-color: #fff;
    list-style: none;
    font-family: Lato, "Noto Sans CJK SC", sans-serif;
    font-size: 7px;
}
.tree li{
    height: 9px;
    display: flex;
    align-items: center;
    white-space: nowrap;
}
.tree svg{
    width: 7px;
    height: 8px;
    margin-right: 1px;
}
.tree i{
    width: 5px;
    height: 5px;
    margin: 0px 2px 0px 1px;
    border-radius: 1px;
    background-color: #dbe7f0;
    color: #33526e;
    font-size: 5px;
    font-style: normal;
    line-height: 5px;
    text-align: center;
}
.tree .leaf{
    background: none;
    border-left: dotted 1px #b6bec6;
}
.tree .dim{
    color: #c1c3c5;
}
.splitter{
    width: 5px;
    padding-top: 192px;
    background-color: #c4d9ea;
}
.splitter span{
    display: block;
    width: 3px;
    height: 38px;
    margin: 0px auto;
    border: solid 1px #93aec6;
    background-color: #dbe9f3;
}
.view{
    flex: 1;
    min-width: 0px;
    background: linear-gradient(#c5dbeb, #a5bdd7 36%, #7e9bc1 66%, #5a79aa);
}
.model{
    width: 100%;
    height: 100%;
}
.rail{
    width: 17px;
    padding-top: 2px;
}
.rail button{
    display: flex;
    align-items: center;
    width: 17px;
    height: 12px;
    padding-left: 1px;
}
.rail svg{
    width: 10px;
    height: 10px;
}
.rail .sep{
    display: block;
    height: 2px;
    margin: 1px 0px;
    background-color: #bfd3e1;
}
.rail .more::after{
    content: "";
    margin-left: 2px;
    border: solid 1px transparent;
    border-left: solid 2px #46505a;
}
.rail .off::after{
    border-left-color: #a5afb8;
}

/* taskbar */
.taskbar{
    height: 20px;
    flex: none;
    display: flex;
    align-items: center;
    border-top: solid 1px #6d7f98;
    background: linear-gradient(#94a3b7, #74869e);
    color: #fff;
}
.pin{
    width: 25px;
    display: flex;
    justify-content: center;
}
.pin svg{
    width: 16px;
    height: 16px;
}
.start{
    width: 30px;
}
.start svg{
    width: 18px;
    height: 18px;
}
.diy span{
    width: 16px;
    padding: 3px 0px;
    border: solid 2px #14b92b;
    border-radius: 2px;
    background-color: #14b92b;
    outline: solid 1px #dfffe2;
    outline-offset: -3px;
    font-size: 5px;
    font-weight: bold;
    line-height: 6px;
}
.task{
    width: 34px;
    height: 19px;
    display: flex;
    align-items: center;
    gap: 4px;
    padding-left: 3px;
    border: solid 1px #6c7d93;
    border-top-color: #b8c4d2;
    border-left-color: #b8c4d2;
    background: linear-gradient(#a5b2c4, #8797ae);
    font-size: 7px;
    white-space: nowrap;
}
.task svg{
    width: 14px;
    height: 14px;
}
.task .center{
    margin: 0px auto;
}
.task.wide{
    width: 35px;
    justify-content: center;
    padding-left: 0px;
}
.task.wide svg{
    width: 17px;
    height: 16px;
}
.task.current, .task.bright{
    background: linear-gradient(#c3cfdd, #a7b5c8);
}
.tray{
    flex: 1;
    display: flex;
    align-items: center;
    justify-content: space-between;
    padding: 0px 6px 0px 4px;
}
.tray svg{
    width: 9px;
    height: 9px;
}
.clock{
    width: 56px;
    display: flex;
    flex-direction: column;
    align-items: center;
    white-space: nowrap;
}
.desktop{
    width: 7px;
    height: 19px;
    border: solid 1px #a6b4c5;
    background-color: #6e7f96;
}

/* studio logo laid over the lower right corner */
.brand{
    position: absolute;
    right: 20px;
    bottom: 16px;
    width: 208px;
    height: 52px;
    display: flex;
    justify-content: space-between;
    border-bottom: solid 9px #b30d16;
    color: #b30d16;
    font-family: "Liberation Sans", sans-serif;
    font-weight: bold;
    white-space: nowrap;
}
.mark{
    display: flex;
    width: 52px;
    font-size: 52px;
    font-style: italic;
    line-height: 48px;
}
.mark b, .mark em{
    width: 22px;
}
.mark em{
    color: #000;
}
.name{
    font-family: "Noto Sans CJK SC", sans-serif;
    font-size: 39px;
    font-weight: 900;
    line-height: 42px;
}
```
